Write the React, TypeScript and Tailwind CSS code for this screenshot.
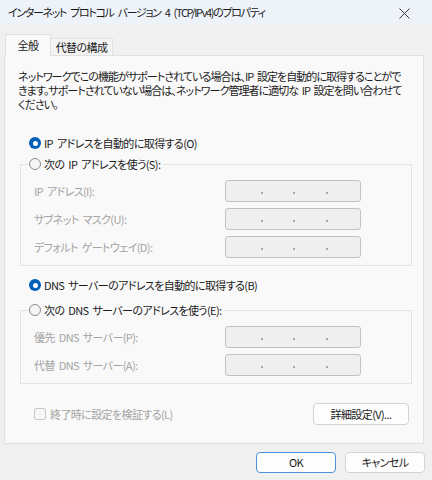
import React from 'react';

const font = "[font-family:'Noto_Sans_CJK_JP',sans-serif] [font-feature-settings:'palt'] [word-spacing:2px]";

function Radio({ checked }: { checked?: boolean }) {
  if (checked) {
    return (
      <span className="w-[12px] h-[12px] rounded-full bg-[#005fb8] flex items-center justify-center shrink-0">
        <span className="w-[5px] h-[5px] rounded-full bg-white" />
      </span>
    );
  }
  return <span className="w-[12px] h-[12px] rounded-full border border-[#8c8c8c] bg-[#f6f6f6] shrink-0" />;
}

function IpBox() {
  return (
    <div className="w-[136px] h-[22px] rounded-[3px] border border-[#c2c2c2] bg-[#efefef] flex items-center">
      <span className="w-[35px]" />
      <span className="w-[2px] h-[2px] bg-[#a8a8a8] mt-[4px]" />
      <span className="w-[30px]" />
      <span className="w-[2px] h-[2px] bg-[#a8a8a8] mt-[4px]" />
      <span className="w-[31px]" />
      <span className="w-[2px] h-[2px] bg-[#a8a8a8] mt-[4px]" />
    </div>
  );
}

function Field({ label }: { label: string }) {
  return (
    <div className="flex items-center h-[22px]">
      <span className="w-[191px] text-[11px] text-[#a3a3a3] whitespace-nowrap">{label}</span>
      <IpBox />
    </div>
  );
}

function Group({ legend, fields }: { legend: string; fields: string[] }) {
  return (
    <fieldset className="ml-[15px] w-[392px] border border-[#e3e3e3] pb-[7px]">
      <legend className="ml-[7px] pl-[1px] pr-[3px] h-[18px] flex items-center gap-[3px] text-[11px] text-[#1b1b1b]">
        <Radio />
        <span>{legend}</span>
      </legend>
      <div className="pl-[13px] pt-[7px] flex flex-col gap-[6px]">
        {fields.map((f) => (
          <Field key={f} label={f} />
        ))}
      </div>
    </fieldset>
  );
}

const description = [
  'ネットワークでこの機能がサポートされている場合は、IP 設定を自動的に取得することがで',
  'きます。サポートされていない場合は、ネットワーク管理者に適切な IP 設定を問い合わせて',
  'ください。',
];

export default function App() {
  return (
    <div className={`w-[432px] h-[480px] bg-[#f0f0f0] flex flex-col text-[#1b1b1b] tracking-[-0.6px] ${font}`}>
      {/* Title bar */}
      <div className="h-[25px] bg-[#eef3fa] flex items-center justify-between pl-[8px] pr-[22px]">
        <span className="text-[11px] tracking-[-1.35px] [word-spacing:3px] whitespace-nowrap">
          インターネット プロトコル バージョン 4 (TCP/IPv4)のプロパティ
        </span>
        <svg width="11" height="11" viewBox="0 0 11 11" className="mt-[1px]">
          <path d="M0.5 0.5 L10.5 10.5 M10.5 0.5 L0.5 10.5" stroke="#3a3a3a" strokeWidth="1" />
        </svg>
      </div>

      {/* Tabs */}
      <div className="flex items-end h-[30px] px-[5px]">
        <div className="relative z-10 w-[46px] h-[22px] bg-[#f9f9f9] border border-b-0 border-[#e0e0e0] flex items-center justify-center text-[11px] -mb-[1px]">
          全般
        </div>
        <div className="w-[62px] h-[17px] bg-[#f3f3f3] border border-b-0 border-l-0 border-[#e3e3e3] flex items-center justify-center text-[11px]">
          代替の構成
        </div>
      </div>

      {/* Panel */}
      <div className="ml-[4px] w-[420px] h-[389px] bg-[#f9f9f9] border border-[#e0e0e0] flex flex-col">
        <div className="mt-[13px] ml-[13px] text-[11px] tracking-[-0.95px] flex flex-col">
          {description.map((line) => (
            <div key={line} className="h-[14px] leading-[14px] whitespace-nowrap">
              {line}
            </div>
          ))}
        </div>

        <div className="mt-[23px] ml-[24px] h-[18px] flex items-center gap-[3px] text-[11px]">
          <Radio checked />
          <span>IP アドレスを自動的に取得する(O)</span>
        </div>

        <div className="mt-[3px]">
          <Group
            legend="次の IP アドレスを使う(S):"
            fields={['IP アドレス(I):', 'サブネット マスク(U):', 'デフォルト ゲートウェイ(D):']}
          />
        </div>

        <div className="mt-[10px] ml-[24px] h-[18px] flex items-center gap-[3px] text-[11px]">
          <Radio checked />
          <span>DNS サーバーのアドレスを自動的に取得する(B)</span>
        </div>

        <div className="mt-[7px]">
          <Group legend="次の DNS サーバーのアドレスを使う(E):" fields={['優先 DNS サーバー(P):', '代替 DNS サーバー(A):']} />
        </div>

        <div className="mt-[19px] ml-[29px] mr-[14px] flex items-center justify-between">
          <div className="flex items-center gap-[4px] text-[11px] text-[#a3a3a3]">
            <span className="w-[12px] h-[12px] rounded-[2px] border border-[#c8c8c8] bg-[#f6f6f6]" />
            <span>終了時に設定を検証する(L)</span>
          </div>
          <button className="w-[96px] h-[22px] rounded-[4px] border border-[#d3d3d3] bg-[#fdfdfd] text-[11px]">
            詳細設定(V)...
          </button>
        </div>
      </div>

      {/* Footer buttons */}
      <div className="flex justify-end gap-[9px] pr-[7px] mt-[8px]">
        <button className="w-[80px] h-[21px] rounded-[4px] border-[1.5px] border-[#4a93dc] bg-[#fdfdfd] text-[11px]">
          OK
        </button>
        <button className="w-[80px] h-[21px] rounded-[4px] border border-[#d3d3d3] bg-[#fdfdfd] text-[11px]">
          キャンセル
        </button>
      </div>
    </div>
  );
}
